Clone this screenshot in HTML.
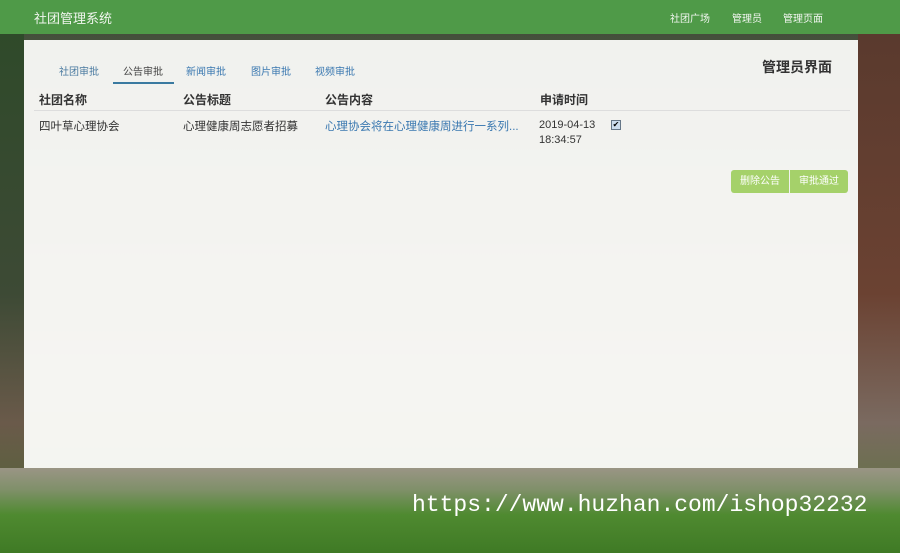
<!DOCTYPE html>
<html><head><meta charset="utf-8"><style>
*{margin:0;padding:0;box-sizing:border-box}
body{width:900px;height:553px;overflow:hidden;position:relative;font-family:"Liberation Sans","Noto Sans CJK SC",sans-serif;
background:linear-gradient(180deg,#3d4a35 0%,#6b6a5c 40%,#8a8577 70%,#7b8a5c 86%,#4f7a32 100%);}
.l{position:absolute;left:0;top:34px;width:24px;height:519px;background:linear-gradient(180deg,#2f4a2a,#3d4a35 50%,#6a5a4a 75%,#4a6a30)}
.r{position:absolute;right:0;top:34px;width:42px;height:519px;background:linear-gradient(180deg,#5a3a2e,#6b4232 50%,#7a6a60 75%,#557a35)}
.bot{position:absolute;left:0;top:468px;width:900px;height:85px;background:linear-gradient(180deg,#9a9585 0%,#80906a 25%,#4f8a30 55%,#3f7a25 100%)}
.top{position:absolute;left:0;top:0;width:900px;height:34px;background:#4f9a48;color:#eef;}
.top .t{position:absolute;left:34px;top:8px;font-size:13px;color:#f0f5ee}
.top .n{position:absolute;top:10px;font-size:10px;color:#f2f6f0}
.panel{position:absolute;left:24px;top:40px;width:834px;height:428px;background:rgba(252,252,250,0.94)}
.tab{position:absolute;top:23px;font-size:10px;color:#3a78b0}
.h{position:absolute;top:51px;font-size:12px;font-weight:bold;color:#333}
.c{position:absolute;top:78px;font-size:11.5px;color:#333}
.btn{position:absolute;top:130px;height:23px;background:#a5d16a;color:#fff;font-size:10px;line-height:23px;text-align:center}
.wm{position:absolute;left:412px;top:492px;font-family:"Liberation Mono",monospace;font-size:23px;color:#fff}
</style></head><body>
<div class="l"></div><div class="r"></div><div class="bot"></div>
<div class="top"><div class="t">社团管理系统</div>
<div class="n" style="left:670px">社团广场</div><div class="n" style="left:732px">管理员</div><div class="n" style="left:783px">管理页面</div></div>
<div class="panel">
<div class="tab" style="left:35px;color:#4a7aa0">社团审批</div>
<div class="tab" style="left:99px;color:#444">公告审批</div>
<div style="position:absolute;left:89px;top:42px;width:61px;height:2px;background:#3a7aa0"></div>
<div class="tab" style="left:162px">新闻审批</div>
<div class="tab" style="left:227px">图片审批</div>
<div class="tab" style="left:291px">视频审批</div>
<div style="position:absolute;left:738px;top:17px;font-size:14px;font-weight:bold;color:#333">管理员界面</div>
<div class="h" style="left:15px">社团名称</div><div class="h" style="left:159px">公告标题</div><div class="h" style="left:301px">公告内容</div><div class="h" style="left:516px">申请时间</div>
<div style="position:absolute;left:10px;top:70px;width:816px;height:1px;background:#ddd"></div>
<div class="c" style="left:15px">四叶草心理协会</div><div class="c" style="left:159px">心理健康周志愿者招募</div>
<div class="c" style="left:301px;color:#3a78b0">心理协会将在心理健康周进行一系列...</div>
<div class="c" style="left:515px;font-size:11px;line-height:15px">2019-04-13<br>18:34:57</div>
<div style="position:absolute;left:587px;top:80px;width:10px;height:10px;background:#cde;border:1px solid #678;font-size:8px;line-height:8px;text-align:center">✔</div>
<div class="btn" style="left:707px;width:58px;border-radius:3px 0 0 3px">删除公告</div>
<div class="btn" style="left:766px;width:58px;border-radius:0 3px 3px 0">审批通过</div>
</div>
<div class="wm">https://www.huzhan.com/ishop32232</div>
</body></html>
